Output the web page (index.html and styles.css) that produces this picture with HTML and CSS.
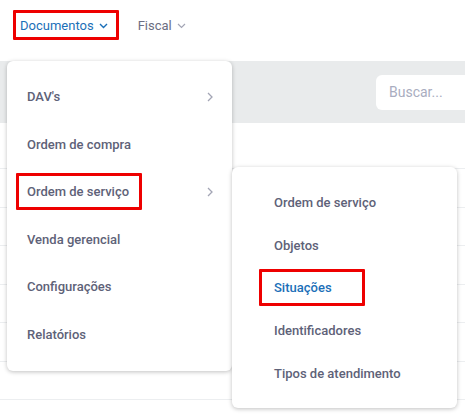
FILE: index.html
```html
<!DOCTYPE html>
<html lang="pt-BR">
<head>
  <meta charset="UTF-8">
  <meta name="viewport" content="width=device-width, initial-scale=1.0">
  <title>Documentos</title>
  <link rel="stylesheet" href="styles.css">
</head>
<body>
  <div class="topnav">
    <div class="nav-item active marked">
      Documentos
      <svg class="caret" width="9" height="6" viewBox="0 0 9 6"><path d="M1 1l3.5 3.5L8 1" fill="none" stroke="currentColor" stroke-width="1.4"/></svg>
    </div>
    <div class="nav-item">
      Fiscal
      <svg class="caret" width="9" height="6" viewBox="0 0 9 6"><path d="M1 1l3.5 3.5L8 1" fill="none" stroke="currentColor" stroke-width="1.2"/></svg>
    </div>
  </div>

  <div class="toolbar">
    <div class="search">Buscar...</div>
  </div>

  <div class="table">
    <div class="table-head"></div>
    <div class="row"></div>
    <div class="row"></div>
    <div class="row"></div>
    <div class="row"></div>
    <div class="row"></div>
    <div class="row"></div>
  </div>

  <div class="menu main-menu">
    <div class="menu-item"><span>DAV's</span><svg class="arrow" width="6" height="10" viewBox="0 0 6 10"><path d="M1 1l4 4-4 4" fill="none" stroke="currentColor" stroke-width="1.3"/></svg></div>
    <div class="menu-item"><span>Ordem de compra</span></div>
    <div class="menu-item"><span class="marked mark-os">Ordem de serviço</span><svg class="arrow" width="6" height="10" viewBox="0 0 6 10"><path d="M1 1l4 4-4 4" fill="none" stroke="currentColor" stroke-width="1.3"/></svg></div>
    <div class="menu-item"><span>Venda gerencial</span></div>
    <div class="menu-item"><span>Configurações</span></div>
    <div class="menu-item"><span>Relatórios</span></div>
  </div>

  <div class="menu sub-menu">
    <div class="menu-item"><span>Ordem de serviço</span></div>
    <div class="menu-item"><span>Objetos</span></div>
    <div class="menu-item current"><span class="marked mark-sit">Situações</span></div>
    <div class="menu-item"><span>Identificadores</span></div>
    <div class="menu-item"><span>Tipos de atendimento</span></div>
  </div>
</body>
</html>
```

FILE: styles.css
```css
body {
  margin: 0;
  font-family: Roboto, "Liberation Sans", sans-serif;
  background: #ffffff;
  color: #5e6278;
  overflow: hidden;
  height: 416px;
}

.topnav {
  height: 61px;
  display: flex;
  align-items: center;
  padding: 0 0 10px 20px;
  box-sizing: border-box;
  gap: 30px;
}

.nav-item {
  position: relative;
  display: flex;
  align-items: center;
  gap: 5px;
  font-size: 13px;
  color: #6b6e82;
}

.nav-item .caret {
  color: #a3a5b5;
}

.nav-item.active {
  color: #1b6fb8;
}

.nav-item.active .caret {
  color: #1b6fb8;
}

.marked {
  position: relative;
}

.marked::after {
  content: "";
  position: absolute;
  border: 3px solid #ee0000;
  border-radius: 1px;
}

.nav-item.marked::after {
  left: -7px;
  right: -11px;
  top: -8px;
  bottom: -7px;
}

.toolbar {
  height: 62px;
  background: #e9ebec;
  display: flex;
  align-items: center;
  justify-content: flex-end;
}

.search {
  width: 76px;
  height: 35px;
  background: #ffffff;
  border-radius: 6px 0 0 6px;
  font-size: 14px;
  color: #a9adc0;
  padding-left: 13px;
  line-height: 35px;
}

.table-head {
  height: 45px;
  border-bottom: 1px solid #eceef0;
}

.row {
  height: 37.5px;
  border-bottom: 1px solid #eceef0;
}

.menu {
  position: absolute;
  background: #ffffff;
  border-radius: 6px;
  box-shadow: 0 1px 4px rgba(0, 0, 0, 0.25);
  box-sizing: border-box;
}

.menu-item {
  display: flex;
  align-items: center;
  justify-content: space-between;
  font-size: 13px;
  font-weight: 500;
  color: #5e6278;
}

.main-menu {
  left: 7px;
  top: 61px;
  width: 225px;
  height: 310px;
  padding: 12px 0 0 20px;
}

.main-menu .menu-item {
  height: 47.5px;
  padding-right: 19px;
}

.arrow {
  color: #a3a5b5;
}

.mark-os::after {
  left: -11px;
  right: -13px;
  top: -11px;
  bottom: -11px;
}

.sub-menu {
  left: 232px;
  top: 167px;
  width: 225px;
  height: 241px;
  padding: 14px 0 0 42px;
}

.sub-menu .menu-item {
  height: 42.75px;
}

.menu-item.current {
  color: #1b6fb8;
}

.mark-sit::after {
  left: -15px;
  right: -33px;
  top: -11px;
  bottom: -11px;
}
```
